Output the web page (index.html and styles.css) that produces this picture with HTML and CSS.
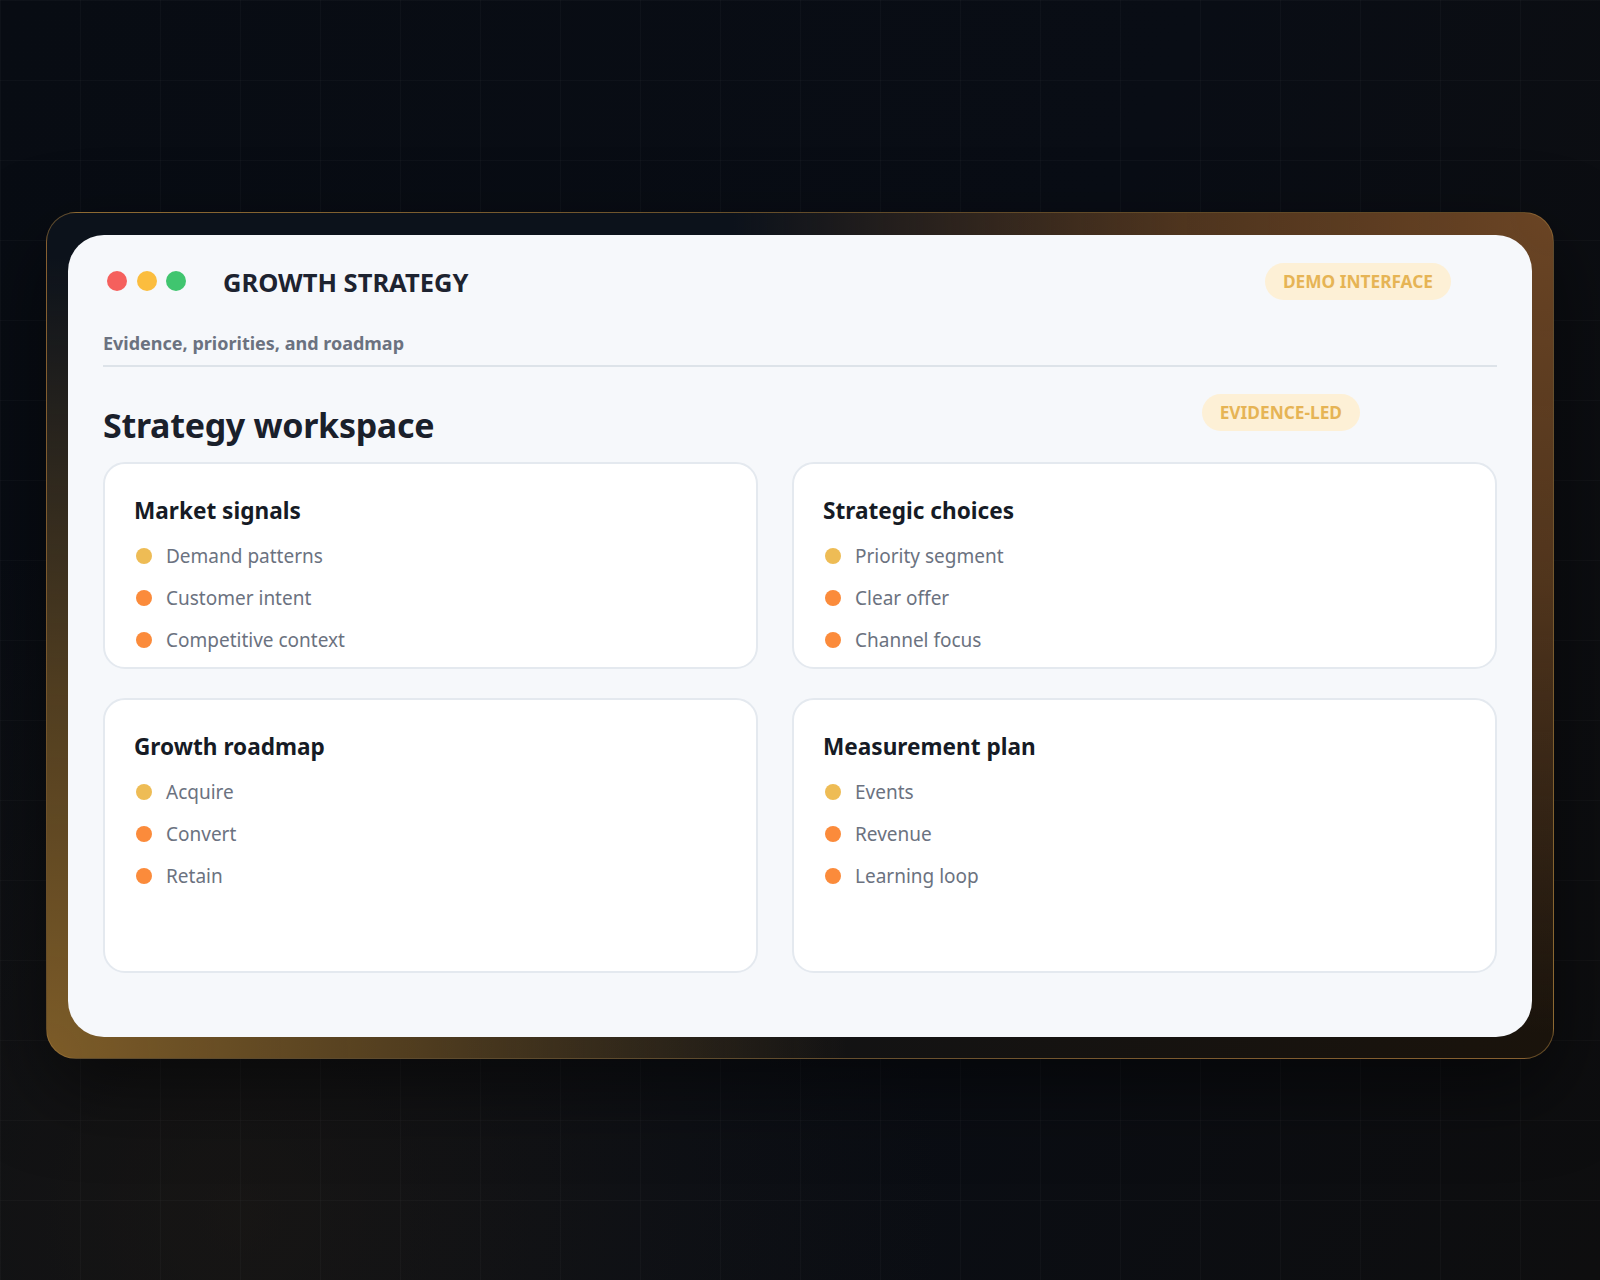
FILE: index.html
```html
<!DOCTYPE html>
<html lang="en">

<head>
    <meta charset="UTF-8">
    <meta name="viewport" content="width=device-width, initial-scale=1.0">
    <title>Growth strategy</title>
    <link rel="stylesheet" href="styles.css">
</head>

<body>
    <div class="frame">
        <div class="window">
            <div class="window-head">
                <div class="lights">
                    <span class="light red"></span>
                    <span class="light yellow"></span>
                    <span class="light green"></span>
                </div>
                <h1>GROWTH STRATEGY</h1>
                <span class="pill demo">DEMO INTERFACE</span>
            </div>
            <p class="subtitle">Evidence, priorities, and roadmap</p>

            <div class="workspace-head">
                <h2>Strategy workspace</h2>
                <span class="pill evidence">EVIDENCE-LED</span>
            </div>

            <div class="board">
                <div class="panel">
                    <h3>Market signals</h3>
                    <ul>
                        <li><i class="dot gold"></i>Demand patterns</li>
                        <li><i class="dot"></i>Customer intent</li>
                        <li><i class="dot"></i>Competitive context</li>
                    </ul>
                </div>
                <div class="panel">
                    <h3>Strategic choices</h3>
                    <ul>
                        <li><i class="dot gold"></i>Priority segment</li>
                        <li><i class="dot"></i>Clear offer</li>
                        <li><i class="dot"></i>Channel focus</li>
                    </ul>
                </div>
                <div class="panel">
                    <h3>Growth roadmap</h3>
                    <ul>
                        <li><i class="dot gold"></i>Acquire</li>
                        <li><i class="dot"></i>Convert</li>
                        <li><i class="dot"></i>Retain</li>
                    </ul>
                </div>
                <div class="panel">
                    <h3>Measurement plan</h3>
                    <ul>
                        <li><i class="dot gold"></i>Events</li>
                        <li><i class="dot"></i>Revenue</li>
                        <li><i class="dot"></i>Learning loop</li>
                    </ul>
                </div>
            </div>
        </div>
    </div>
</body>

</html>
```

FILE: styles.css
```css
* {
    margin: 0;
    padding: 0;
    box-sizing: border-box;
}

body {
    min-height: 1280px;
    display: flex;
    align-items: center;
    justify-content: center;
    padding-bottom: 10px;
    font-family: "Noto Sans", "Open Sans", sans-serif;
    background-color: #0a0d12;
    background-image:
        linear-gradient(rgba(255, 255, 255, 0.025) 1px, transparent 1px),
        linear-gradient(90deg, rgba(255, 255, 255, 0.025) 1px, transparent 1px),
        radial-gradient(circle 700px at 15% 95%, rgba(40, 32, 20, 0.45), transparent),
        linear-gradient(115deg, #080c13 0%, #090d15 55%, #0e0e0f 100%);
    background-size: 80px 80px, 80px 80px, auto, auto;
}

.frame {
    width: 1508px;
    padding: 22px 21px 21px 21px;
    border: 1px solid rgba(160, 120, 60, 0.55);
    border-radius: 30px;
    background:
        radial-gradient(circle 820px at 100% 0%, #6a4424 0%, rgba(100, 64, 32, 0.75) 45%, transparent 100%),
        radial-gradient(circle 800px at 0% 100%, #7d5c28 0%, rgba(110, 80, 34, 0.7) 45%, transparent 100%),
        linear-gradient(135deg, #0c121b 40%, #1a130b 100%);
    box-shadow: 0 30px 80px rgba(0, 0, 0, 0.5);
}

.window {
    background: #f6f8fb;
    border-radius: 36px;
    padding: 28px 35px 64px 35px;
}

.window-head {
    display: flex;
    align-items: center;
    height: 37px;
    padding-left: 4px;
    padding-right: 46px;
}

.lights {
    display: flex;
    gap: 9.5px;
}

.light {
    width: 20px;
    height: 20px;
    border-radius: 50%;
}

.light.red {
    background: #f5605d;
}

.light.yellow {
    background: #fbbd3e;
}

.light.green {
    background: #40c56f;
}

.window-head h1 {
    margin-left: 37px;
    margin-top: 4px;
    font-size: 25.5px;
    font-weight: 700;
    color: #1d2330;
    line-height: 1.3;
}

.pill {
    margin-left: auto;
    height: 37px;
    line-height: 37px;
    padding: 0 18px;
    border-radius: 19px;
    background: #fdf0d6;
    color: #e6b455;
    font-size: 17.3px;
    font-weight: 700;
}

.subtitle {
    margin-top: 31px;
    padding-bottom: 9px;
    border-bottom: 2px solid #dde3e9;
    font-size: 18px;
    line-height: 25px;
    font-weight: 700;
    color: #6b7280;
}

.workspace-head {
    display: flex;
    align-items: flex-start;
    margin-top: 25px;
    padding-right: 137px;
}

.workspace-head .pill {
    margin-top: 2px;
}

.workspace-head h2 {
    margin-top: 10px;
    font-size: 34px;
    letter-spacing: -0.3px;
    line-height: 47px;
    font-weight: 700;
    color: #1a202b;
}

.board {
    margin-top: 13px;
    display: grid;
    grid-template-columns: 655px 705px;
    grid-template-rows: 207px 275px;
    column-gap: 34px;
    row-gap: 29px;
}

.panel {
    background: #fff;
    border: 2px solid #e4e9ef;
    border-radius: 22px;
    padding: 31px 30px 0 29px;
}

.panel h3 {
    font-size: 22.6px;
    line-height: 32px;
    font-weight: 700;
    color: #161b25;
}

.panel ul {
    list-style: none;
    margin-top: 14px;
    padding-left: 2px;
    display: flex;
    flex-direction: column;
    gap: 12px;
}

.panel li {
    display: flex;
    align-items: center;
    font-size: 19px;
    line-height: 30px;
    color: #6b7280;
}

.dot {
    width: 16px;
    height: 16px;
    border-radius: 50%;
    margin-right: 14px;
    background: #fb8b3b;
}

.dot.gold {
    background: #eebc55;
}
```
